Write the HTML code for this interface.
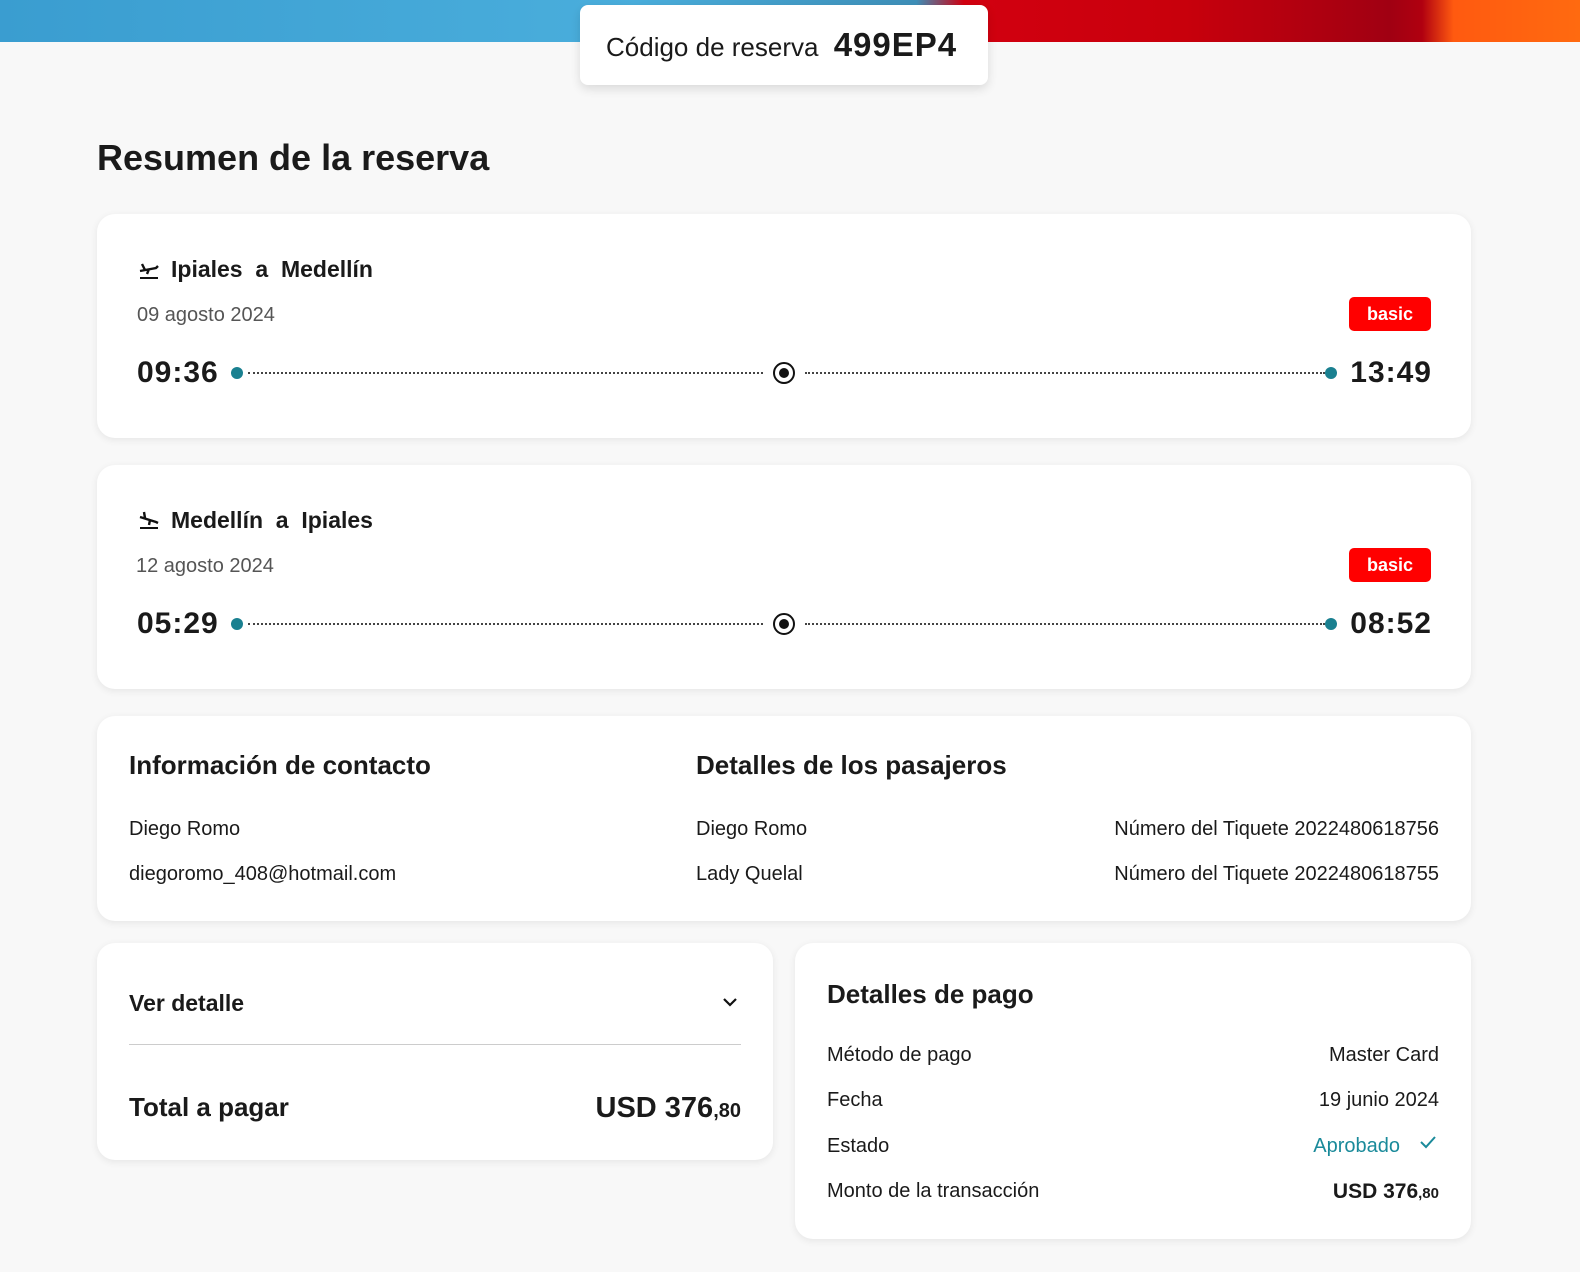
<!DOCTYPE html>
<html><head><meta charset="utf-8"><style>
*{margin:0;padding:0;box-sizing:border-box}
body{width:1580px;height:1272px;background:#f8f8f8;font-family:"Liberation Sans",sans-serif;color:#1a1a1a;position:relative;overflow:hidden}
.a{position:absolute}
.hdr{left:0;top:0;width:1580px;height:42px;background:linear-gradient(90deg,#3a9dd0 0%,#4aaedc 40%,#3e8fb8 58%,#d20010 61%,#c8000c 75%,#a00012 88%,#b00010 90%,#ff5a10 92%,#ff6a10 100%)}
.card{background:#fff;border-radius:18px;box-shadow:0 2px 8px rgba(0,0,0,.08)}
.b{font-weight:bold}
.t{font-size:23px;font-weight:bold}
.g{color:#555;font-size:20px}
.r{font-size:20px}
.badge{background:#f00;color:#fff;font-weight:bold;font-size:18px;border-radius:5px;width:82px;height:34px;line-height:34px;text-align:center}
.time{font-size:30px;font-weight:bold;letter-spacing:1px}
.dot{width:12px;height:12px;border-radius:50%;background:#1a8090}
.line{border-top:2px dotted #444;height:0}
.mid{width:22px;height:22px;border:2px solid #111;border-radius:50%;background:#fff}
.mid:after{content:"";position:absolute;left:4px;top:4px;width:10px;height:10px;border-radius:50%;background:#111}
</style></head><body>
<div class="a hdr"></div>
<div class="a card" style="left:580px;top:5px;width:408px;height:80px;border-radius:8px;box-shadow:0 4px 10px rgba(0,0,0,.12)"></div>
<div class="a" style="left:606px;top:26px;font-size:26px;white-space:nowrap">Código de reserva <b style="font-size:33px;margin-left:8px;letter-spacing:1px">499EP4</b></div>
<div class="a b" style="left:97px;top:137px;font-size:36px">Resumen de la reserva</div>

<div class="a card" style="left:97px;top:214px;width:1374px;height:224px"></div>
<svg class="a" style="left:138px;top:259px" width="22" height="22" viewBox="0 0 22 22"><path d="M2 12 L18 9 L20 7 M7 11 L4 5 M11 10 L9 15" stroke="#111" stroke-width="2.4" fill="none"/><path d="M2 19H20" stroke="#111" stroke-width="2"/></svg>
<div class="a t" style="left:171px;top:256px">Ipiales&nbsp; a&nbsp; Medellín</div>
<div class="a g" style="left:137px;top:304px">09 agosto 2024</div>
<div class="a badge" style="left:1349px;top:297px">basic</div>
<div class="a time" style="left:137px;top:356px">09:36</div>
<div class="a dot" style="left:231px;top:367px"></div>
<div class="a line" style="left:248px;top:372px;width:515px"></div>
<div class="a mid" style="left:773px;top:362px"></div>
<div class="a line" style="left:805px;top:372px;width:520px"></div>
<div class="a dot" style="left:1325px;top:367px"></div>
<div class="a time" style="right:148px;top:356px">13:49</div>

<div class="a card" style="left:97px;top:465px;width:1374px;height:224px"></div>
<svg class="a" style="left:138px;top:509px" width="22" height="22" viewBox="0 0 22 22"><path d="M2 8 L18 13 L20 14 M7 9 L6 3 M12 11 L11 16" stroke="#111" stroke-width="2.4" fill="none"/><path d="M2 19H20" stroke="#111" stroke-width="2"/></svg>
<div class="a t" style="left:171px;top:507px">Medellín&nbsp; a&nbsp; Ipiales</div>
<div class="a g" style="left:136px;top:555px">12 agosto 2024</div>
<div class="a badge" style="left:1349px;top:548px">basic</div>
<div class="a time" style="left:137px;top:607px">05:29</div>
<div class="a dot" style="left:231px;top:618px"></div>
<div class="a line" style="left:248px;top:623px;width:515px"></div>
<div class="a mid" style="left:773px;top:613px"></div>
<div class="a line" style="left:805px;top:623px;width:520px"></div>
<div class="a dot" style="left:1325px;top:618px"></div>
<div class="a time" style="right:148px;top:607px">08:52</div>

<div class="a card" style="left:97px;top:716px;width:1374px;height:205px"></div>
<div class="a b" style="left:129px;top:750px;font-size:26px">Información de contacto</div>
<div class="a b" style="left:696px;top:750px;font-size:26px">Detalles de los pasajeros</div>
<div class="a r" style="left:129px;top:818px">Diego Romo</div>
<div class="a r" style="left:129px;top:863px">diegoromo_408@hotmail.com</div>
<div class="a r" style="left:696px;top:818px">Diego Romo</div>
<div class="a r" style="left:696px;top:863px">Lady Quelal</div>
<div class="a r" style="right:141px;top:818px">Número del Tiquete 2022480618756</div>
<div class="a r" style="right:141px;top:863px">Número del Tiquete 2022480618755</div>

<div class="a card" style="left:97px;top:943px;width:676px;height:217px"></div>
<div class="a b" style="left:129px;top:990px;font-size:23px">Ver detalle</div>
<svg class="a" style="left:722px;top:996px" width="16" height="12" viewBox="0 0 16 12"><path d="M2 3 L8 9 L14 3" stroke="#111" stroke-width="2.2" fill="none"/></svg>
<div class="a" style="left:129px;top:1044px;width:612px;border-top:1px solid #ccc"></div>
<div class="a b" style="left:129px;top:1092px;font-size:26px">Total a pagar</div>
<div class="a b" style="right:839px;top:1092px;font-size:29px">USD 376<span style="font-size:20px">,80</span></div>

<div class="a card" style="left:795px;top:943px;width:676px;height:296px"></div>
<div class="a b" style="left:827px;top:979px;font-size:26px">Detalles de pago</div>
<div class="a r" style="left:827px;top:1044px">Método de pago</div>
<div class="a r" style="left:827px;top:1089px">Fecha</div>
<div class="a r" style="left:827px;top:1135px">Estado</div>
<div class="a r" style="left:827px;top:1180px">Monto de la transacción</div>
<div class="a r" style="right:141px;top:1044px">Master Card</div>
<div class="a r" style="right:141px;top:1089px">19 junio 2024</div>
<div class="a r" style="right:180px;top:1135px;color:#1a8a9a">Aprobado</div>
<svg class="a" style="left:1419px;top:1135px" width="18" height="14" viewBox="0 0 18 14"><path d="M2 7 L7 12 L16 2" stroke="#1a8a9a" stroke-width="2" fill="none"/></svg>
<div class="a b" style="right:141px;top:1180px;font-size:21px">USD 376<span style="font-size:15px">,80</span></div>
</body></html>
